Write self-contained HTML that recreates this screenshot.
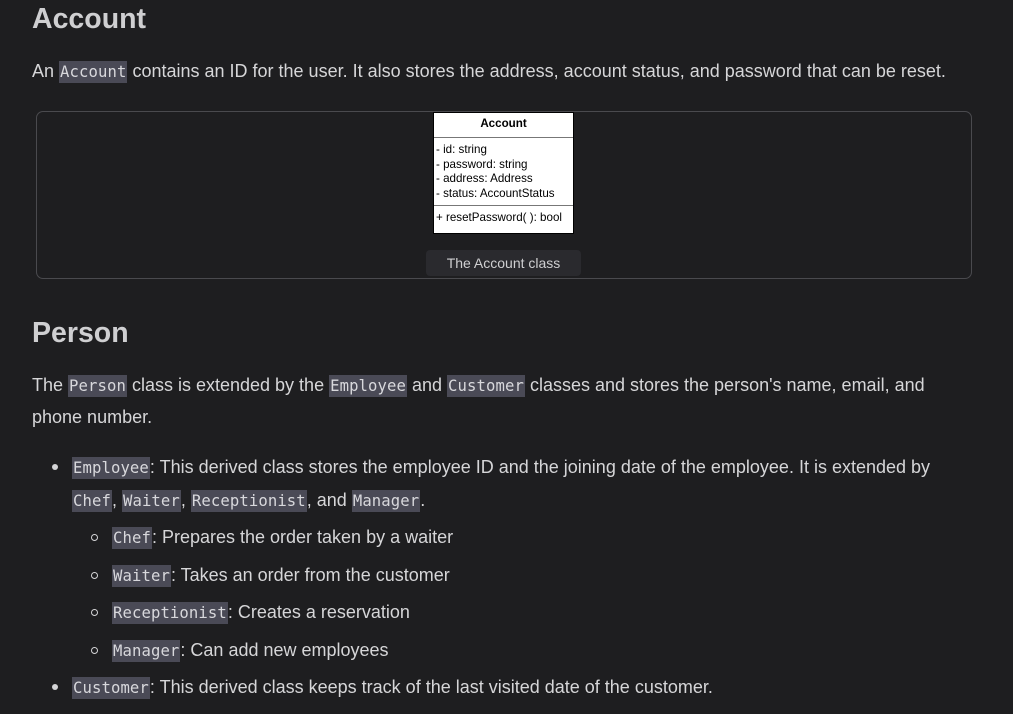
<!DOCTYPE html>
<html><head><meta charset="utf-8"><style>
body{margin:0;background:#1e1e20;width:1013px;height:714px;overflow:hidden;font-family:"Liberation Sans",Arial,sans-serif;color:#d6d6d8;}
.a{position:absolute;white-space:nowrap;font-size:18px;line-height:22px}
h1{position:absolute;margin:0;font-size:28.5px;font-weight:bold;color:#cfcfd1;line-height:34px}
code{font-family:"DejaVu Sans Mono","Liberation Mono",monospace;font-size:15.6px;background:#4a4a56;color:#d8d8dc;padding:2px 1px;letter-spacing:0.1px}
.box{position:absolute;left:36px;top:111px;width:934px;height:166px;border:1px solid #4a4a4e;border-radius:7px}
.uml{position:absolute;left:433px;top:112px;width:139px;height:120px;background:#fff;border:1px solid #000;color:#000;font-size:11.6px;line-height:14.5px}
.uml .t{text-align:center;font-weight:bold;height:24px;line-height:22px;border-bottom:1px solid #777}
.uml .f{padding:5px 2px 4px;border-bottom:1px solid #777}
.uml .m{padding:5px 2px}
.cap{position:absolute;left:426px;top:250px;width:155px;height:26px;background:#2a2a2e;border-radius:4px;font-size:14px;line-height:26px;text-align:center;color:#cfcfd1}
.dot{position:absolute;width:6px;height:6px;border-radius:50%;background:#d4d4d6}
.circ{position:absolute;width:5px;height:5px;border-radius:50%;border:1.3px solid #d4d4d6}
</style></head><body>
<h1 style="left:32px;top:2px">Account</h1>
<div class="a" style="left:32px;top:60px">An <code>Account</code> contains an ID for the user. It also stores the address, account status, and password that can be reset.</div>
<div class="box"></div>
<div class="uml"><div class="t">Account</div><div class="f">- id: string<br>- password: string<br>- address: Address<br>- status: AccountStatus</div><div class="m">+ resetPassword( ): bool</div></div>
<div class="cap">The Account class</div>
<h1 style="left:32px;top:316px">Person</h1>
<div class="a" style="left:32px;top:374px">The <code>Person</code> class is extended by the <code>Employee</code> and <code>Customer</code> classes and stores the person's name, email, and</div>
<div class="a" style="left:32px;top:406px">phone number.</div>
<div class="dot" style="left:52px;top:464px"></div>
<div class="a" style="left:72px;top:456px"><code>Employee</code>: This derived class stores the employee ID and the joining date of the employee. It is extended by</div>
<div class="a" style="left:72px;top:489px"><code>Chef</code>, <code>Waiter</code>, <code>Receptionist</code>, and <code>Manager</code>.</div>
<div class="circ" style="left:91px;top:534px"></div>
<div class="a" style="left:112px;top:526px"><code>Chef</code>: Prepares the order taken by a waiter</div>
<div class="circ" style="left:91px;top:572px"></div>
<div class="a" style="left:112px;top:564px"><code>Waiter</code>: Takes an order from the customer</div>
<div class="circ" style="left:91px;top:609px"></div>
<div class="a" style="left:112px;top:601px"><code>Receptionist</code>: Creates a reservation</div>
<div class="circ" style="left:91px;top:647px"></div>
<div class="a" style="left:112px;top:639px"><code>Manager</code>: Can add new employees</div>
<div class="dot" style="left:52px;top:684px"></div>
<div class="a" style="left:72px;top:676px"><code>Customer</code>: This derived class keeps track of the last visited date of the customer.</div>
</body></html>
